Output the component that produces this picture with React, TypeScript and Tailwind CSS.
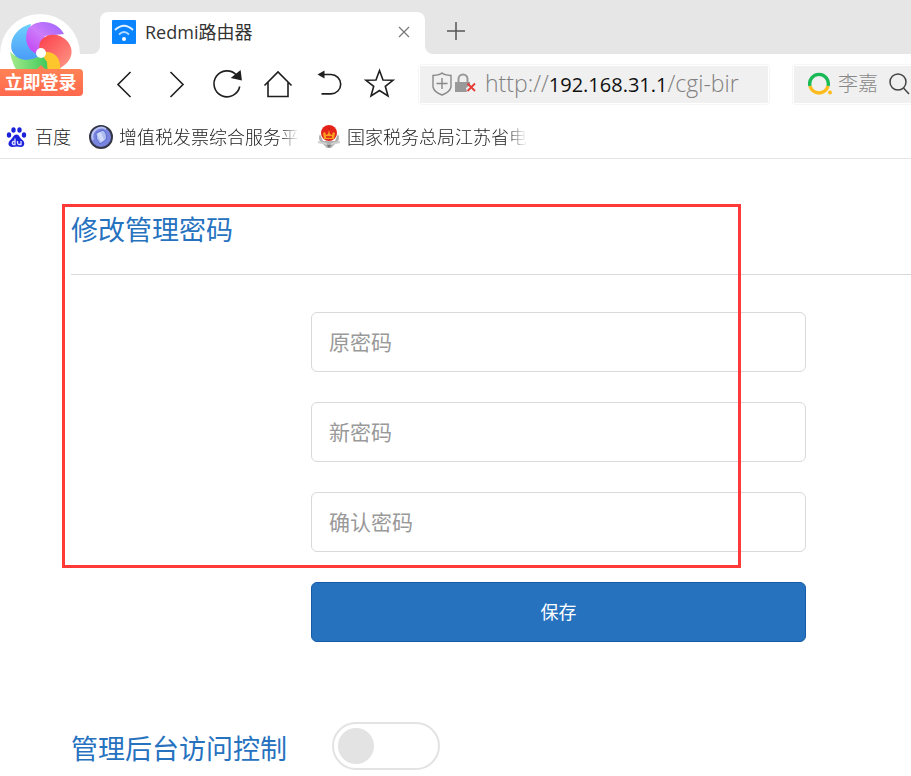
import React, { useState } from 'react';

const PinwheelLogo = () => (
  <svg viewBox="0 0 80 80" className="block h-20 w-20" aria-hidden="true">
    <defs>
      <linearGradient id="petalBlue" x1="0" y1="0" x2="0" y2="1">
        <stop offset="0" stopColor="#6fd0fd" />
        <stop offset="1" stopColor="#4a9cf8" />
      </linearGradient>
      <linearGradient id="petalPurple" x1="1" y1="0" x2="0" y2="1">
        <stop offset="0" stopColor="#9a62fb" />
        <stop offset="0.5" stopColor="#cd7bfb" />
        <stop offset="1" stopColor="#c13df0" />
      </linearGradient>
      <linearGradient id="petalRed" x1="0" y1="0" x2="1" y2="1">
        <stop offset="0" stopColor="#fb3d4c" />
        <stop offset="1" stopColor="#ff9a86" />
      </linearGradient>
      <linearGradient id="petalGreen" x1="0" y1="0" x2="1" y2="0">
        <stop offset="0" stopColor="#a5ea8c" />
        <stop offset="1" stopColor="#3fc95a" />
      </linearGradient>
    </defs>
    <circle cx="40" cy="40" r="40" fill="#fff" />
    <path d="M41 39C48 31 60 36 61 47Q62 56 56 64H38L46 52Z" fill="#fdc62c" />
    <path d="M42 41L47 48L48 64H22Q12 52 10 38Q23 50 42 41Z" fill="url(#petalGreen)" />
    <path d="M31 10C15 14 9 27 12 37C18 50 34 46 42 41L27 27Z" fill="url(#petalBlue)" />
    <path d="M64 20C57 6 36 4 28 15C23 27 29 39 39 40L45 22Z" fill="url(#petalPurple)" />
    <path d="M40 37C36 24 50 18 60 22C75 29 76 46 60 54C61 43 53 35 40 39Z" fill="url(#petalRed)" />
    <circle cx="41" cy="39" r="5" fill="#fff" />
    <path d="M36 56L41 51L46 56Z" fill="#ff8254" />
  </svg>
);

const RouterIcon = () => (
  <svg viewBox="0 0 24 24" className="h-6 w-6 shrink-0" aria-hidden="true">
    <rect width="24" height="24" rx="1" fill="#0a84ff" />
    <path d="M3 10Q12 1.500 21 10" fill="none" stroke="#e5f2ff" strokeWidth="1.800" />
    <path d="M7 14.500Q12 9.500 17 14.500" fill="none" stroke="#b5daff" strokeWidth="1.800" />
    <circle cx="12" cy="19" r="2" fill="#fff" />
  </svg>
);

const NavSvg = ({ children }: { children: React.ReactNode }) => (
  <svg viewBox="0 0 32 32" className="h-8 w-8" fill="none" stroke="#1f1f1f" strokeWidth="1.600" aria-hidden="true">
    {children}
  </svg>
);

const navButtons = [
  { label: '后退', icon: <path d="M21.500 4L9 16.500L21.500 29" /> },
  { label: '前进', icon: <path d="M10.500 4L23 16.500L10.500 29" /> },
  {
    label: '刷新',
    icon: (
      <>
        <path d="M28.700 18.500A13 13 0 1 1 25.500 7" />
        <path d="M29 3.500L30 11.500L21.500 9.500Z" fill="#1f1f1f" />
      </>
    ),
  },
  { label: '主页', icon: <path d="M2.500 17.500L16 4L29.500 17.500M6 14.500V28.500H26V14.500" /> },
  {
    label: '恢复',
    icon: (
      <>
        <path d="M9 6.500H18A9.700 9.700 0 0 1 18 25.900H8.500" />
        <path d="M4.500 6.500L11.500 2.500V10.500Z" fill="#1f1f1f" stroke="none" />
      </>
    ),
  },
  { label: '收藏', icon: <path d="M15.500 2.500L19 12L29 12.300L21.300 18.300L24 28L15.500 22.500L7 28L9.700 18.300L2 12.300L12 12Z" /> },
];

const BaiduIcon = () => (
  <svg viewBox="0 0 22 22" className="h-[22px] w-[22px] shrink-0" fill="#1c22dc" aria-hidden="true">
    <ellipse cx="3" cy="9" rx="2.200" ry="2.800" />
    <ellipse cx="7.500" cy="4" rx="2.200" ry="2.800" />
    <ellipse cx="13.500" cy="4" rx="2.200" ry="2.800" />
    <ellipse cx="18" cy="9" rx="2.200" ry="2.800" />
    <path d="M10.500 8.500C13.500 8.500 13.500 12 16.500 14C19.500 16.500 18.500 21 15 21Q10.500 20 6.500 21C2 21 1.500 17 4 14.500C7 12 7.500 8.500 10.500 8.500Z" />
    <path d="M9 12.500V18.500H7Q5.500 17 7 15.500H9M11.500 15V17Q11.500 18.500 13 18.500H15V15" fill="none" stroke="#dfe0ff" strokeWidth="1.300" />
  </svg>
);

const InvoiceIcon = () => (
  <svg viewBox="0 0 24 24" className="h-6 w-6 shrink-0" aria-hidden="true">
    <circle cx="12" cy="12" r="11" fill="#7984df" stroke="#343645" strokeWidth="2" />
    <path d="M4 15A9 9 0 0 1 17 4" fill="none" stroke="#b7c1f5" strokeWidth="2" />
    <path d="M7 8L14 5Q19 9 17 15L11 19Q6 14 7 8Z" fill="#aebdf0" stroke="#5968d0" />
    <path d="M8 9L12 7L15 15L12 17Z" fill="#d0daf8" />
  </svg>
);

const TaxIcon = () => (
  <svg viewBox="0 0 24 24" className="h-6 w-6 shrink-0" aria-hidden="true">
    <path d="M3 9Q0 15 6 19L10 23H14L18 19Q24 15 21 9L18 16H6Z" fill="#b0b0b0" />
    <path d="M1 17L10 19M23 17L14 19" stroke="#cfcfcf" strokeWidth="2" />
    <circle cx="12" cy="8" r="8" fill="#e4231b" />
    <path d="M6 8L8 7L9 10L11 9L12 5L13 9L15 10L16 7L18 8L17 14H7Z" fill="#f9a11f" />
    <path d="M9 12H15M12 2V5" stroke="#d31c16" strokeWidth="1.500" />
    <path d="M10 20H14L12 23Z" fill="#777" />
  </svg>
);

const bookmarks = [
  { name: '百度', icon: <BaiduIcon />, gap: 'gap-[7px]', fade: '' },
  {
    name: '增值税发票综合服务平',
    icon: <InvoiceIcon />,
    gap: 'gap-1.5',
    fade: '[mask-image:linear-gradient(to_right,black_88%,transparent)]',
  },
  {
    name: '国家税务总局江苏省电',
    icon: <TaxIcon />,
    gap: 'gap-1.5',
    fade: '[mask-image:linear-gradient(to_right,black_88%,transparent)]',
  },
];

const TabStrip = () => (
  <header className="flex h-[54px] items-end bg-[#e6e6e6] pl-[92px]">
    <span className="bg-white">
      <span className="block h-2 w-2 rounded-br-lg bg-[#e6e6e6]" />
    </span>
    <div className="flex h-[42px] w-[325px] items-center rounded-t-lg bg-white pr-[11px] pb-0.5 pl-3">
      <RouterIcon />
      <span className="ml-[9px] flex-1 text-lg leading-6 text-[#333]">Redmi路由器</span>
      <button type="button" aria-label="关闭标签页" className="flex h-5 w-5 items-center justify-center">
        <svg viewBox="0 0 12 12" className="h-3 w-3" stroke="#777" strokeWidth="1.200">
          <path d="M1 1L11 11M11 1L1 11" />
        </svg>
      </button>
    </div>
    <span className="bg-white">
      <span className="block h-2 w-2 rounded-bl-lg bg-[#e6e6e6]" />
    </span>
    <button type="button" aria-label="新建标签页" className="mb-2 ml-2 flex h-[30px] w-[30px] items-center justify-center">
      <svg viewBox="0 0 18 18" className="h-[18px] w-[18px]" stroke="#555" strokeWidth="1.500">
        <path d="M9 0V18M0 9H18" />
      </svg>
    </button>
  </header>
);

const Toolbar = () => (
  <div className="flex h-[62px] items-center overflow-hidden pb-0.5 pl-[109px]">
    <nav className="flex shrink-0 gap-[19px]">
      {navButtons.map((b) => (
        <button key={b.label} type="button" aria-label={b.label}>
          <NavSvg>{b.icon}</NavSvg>
        </button>
      ))}
    </nav>

    <div className="ml-[22px] min-w-0 flex-1 rounded border border-[#f6f6f6] p-px">
      <div className="flex h-[37px] items-center bg-[#f0f0f0] pl-3">
        <svg viewBox="0 0 20 24" className="h-6 w-5 shrink-0" fill="none" stroke="#888" strokeWidth="1.400" aria-hidden="true">
          <path d="M10 1Q12 3 19 3.500V15Q18 20 10 23Q2 20 1 15V3.500Q8 3 10 1ZM10 6V17M4.500 11.500H15.500" />
        </svg>
        <svg viewBox="0 0 22 22" className="ml-[3px] h-[22px] w-[22px] shrink-0" fill="none" aria-hidden="true">
          <path d="M3.500 10V6A4.500 4.500 0 0 1 12.500 6V10" stroke="#999" strokeWidth="2" />
          <path d="M0 9H15V12L11 15L12 19H0Z" fill="#999" />
          <path d="M12.500 10.500L20 18M20 10.500L12.500 18" stroke="#e53935" strokeWidth="1.800" />
        </svg>
        <div className="ml-2 flex items-baseline pb-0.5 text-[23px] leading-8 whitespace-nowrap text-[#808080]">
          <span className="font-light">http://</span>
          <span className="text-xl text-[#111]">192.168.31.1</span>
          <span className="font-light">/cgi-bir</span>
        </div>
      </div>
    </div>

    <div className="ml-[22px] w-[119px] shrink-0 rounded-l border border-r-0 border-[#f6f6f6] py-px pl-px">
      <div className="flex h-[37px] items-center bg-[#f0f0f0] pl-[14px]">
        <svg viewBox="0 0 24 24" className="h-6 w-6 shrink-0" fill="none" strokeWidth="3.400" aria-hidden="true">
          <path d="M2 14A9.300 9.300 0 1 1 20 14" stroke="#19b955" />
          <path d="M2 14A9.300 9.300 0 0 0 20 14" stroke="#fdbc1b" />
          <circle cx="22" cy="20.500" r="2" fill="#fdbc1b" />
        </svg>
        <span className="ml-[6px] text-xl font-light whitespace-nowrap text-[#888]">李嘉</span>
        <button type="button" aria-label="搜索" className="ml-[11px] shrink-0">
          <svg viewBox="0 0 22 22" className="h-[22px] w-[22px]" fill="none" stroke="#444" strokeWidth="1.500">
            <circle cx="9" cy="9" r="8" />
            <path d="M14.500 15L20 21" />
          </svg>
        </button>
      </div>
    </div>
  </div>
);

export default function App() {
  const [oldPwd, setOldPwd] = useState('');
  const [newPwd, setNewPwd] = useState('');
  const [confirmPwd, setConfirmPwd] = useState('');
  const [accessControl, setAccessControl] = useState(false);

  const fields = [
    { label: '原密码', value: oldPwd, onChange: setOldPwd },
    { label: '新密码', value: newPwd, onChange: setNewPwd },
    { label: '确认密码', value: confirmPwd, onChange: setConfirmPwd },
  ];

  return (
    <div className="relative min-h-screen overflow-x-hidden bg-white font-['Open_Sans','Noto_Sans_CJK_SC',sans-serif]">
      <TabStrip />
      <Toolbar />

      <button type="button" className="absolute top-[14px] left-0 flex h-[82px] w-[83px] items-start">
        <PinwheelLogo />
        <span className="absolute bottom-0 left-0 w-full rounded-r-sm bg-gradient-to-b from-[#ff8254] to-[#ff684d] pr-0.5 text-lg leading-[27px] font-bold text-white">
          立即登录
        </span>
      </button>

      <nav className="flex h-[43px] items-center gap-[18px] overflow-hidden border-b border-[#e5e5e5] pl-[6px] whitespace-nowrap">
        {bookmarks.map((b) => (
          <a key={b.name} href="#" className={`flex items-center text-lg leading-6 font-light text-[#222] ${b.gap}`}>
            {b.icon}
            <span className={b.fade}>{b.name}</span>
          </a>
        ))}
      </nav>

      <main className="relative pt-[51px] pl-[71px]">
        {/* highlight around the password section */}
        <div className="pointer-events-none absolute top-[45px] left-[62px] h-[364px] w-[679px] border-3 border-[#ff3838]" />

        <section>
          <h2 className="border-b border-[#d9d9d9] pb-6 text-[27px] leading-10 text-[#2672bf]">修改管理密码</h2>
          <form
            className="mt-[37px] ml-60 flex max-w-[495px] flex-col gap-[30px]"
            onSubmit={(e) => e.preventDefault()}
          >
            {fields.map((f) => (
              <input
                key={f.label}
                type="password"
                aria-label={f.label}
                placeholder={f.label}
                value={f.value}
                onChange={(e) => f.onChange(e.target.value)}
                className="h-[60px] w-full rounded-md border border-[#d9d9d9] px-[17px] text-[21px] text-[#333] placeholder:text-[#999]"
              />
            ))}
            <button
              type="submit"
              className="h-[60px] w-full rounded-md border border-[#145ca6] bg-[#2672bf] text-lg text-white"
            >
              保存
            </button>
          </form>
        </section>

        <section className="mt-20 flex items-center gap-[45px]">
          <label htmlFor="access-control" className="pt-1.5 text-[27px] leading-10 text-[#2672bf]">
            管理后台访问控制
          </label>
          <input
            id="access-control"
            type="checkbox"
            role="switch"
            checked={accessControl}
            onChange={(e) => setAccessControl(e.target.checked)}
            className="h-12 w-[108px] appearance-none rounded-full border-2 border-[#e3e3e3] bg-white p-1 before:block before:h-9 before:w-9 before:rounded-full before:bg-[#e3e3e3] checked:before:ml-auto checked:before:bg-[#2672bf]"
          />
        </section>
      </main>
    </div>
  );
}
